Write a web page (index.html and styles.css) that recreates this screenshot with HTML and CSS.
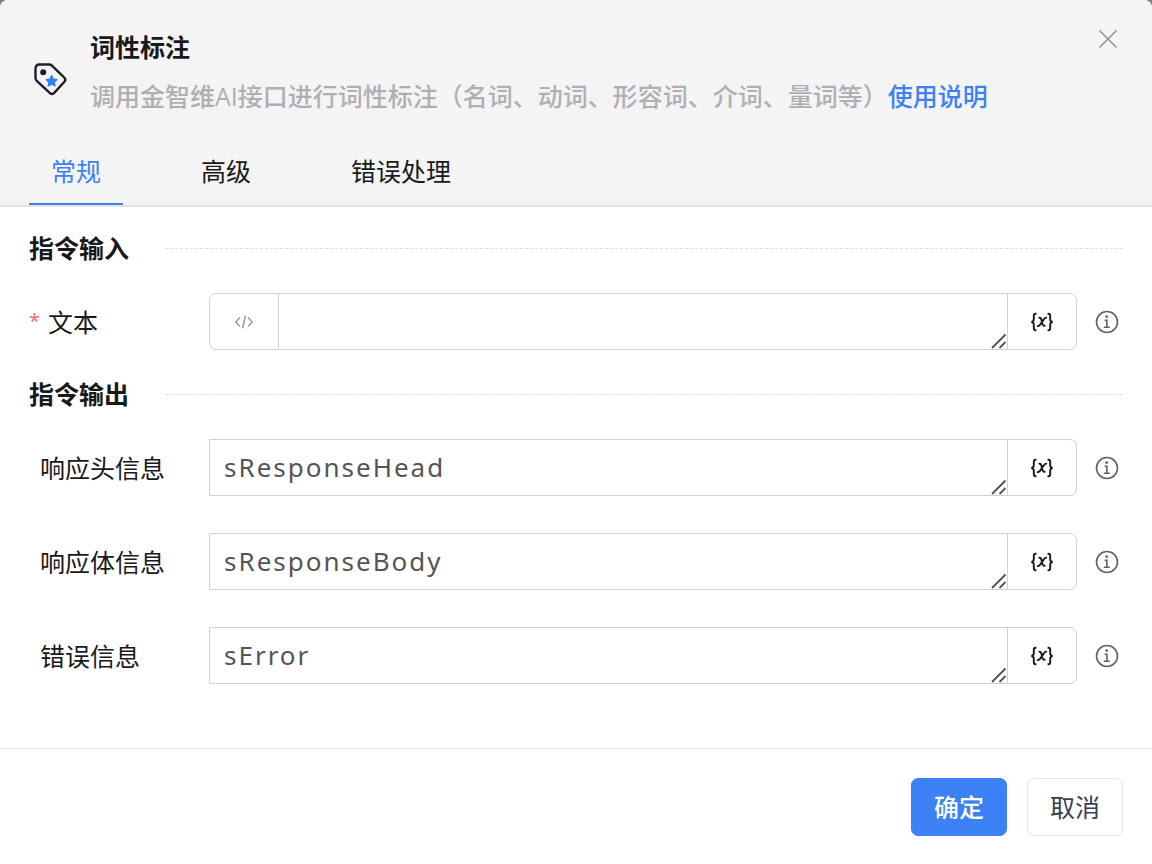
FILE: index.html
```
<!DOCTYPE html>
<html lang="zh-CN">
<head>
  <meta charset="UTF-8">
  <meta name="viewport" content="width=device-width, initial-scale=1.0">
  <title>词性标注</title>
  <link rel="stylesheet" href="styles.css">
</head>
<body>

  <!-- shared icons -->
  <svg class="sprite" aria-hidden="true">
    <symbol id="icon-info" viewBox="0 0 24 24">
      <circle cx="12" cy="12" r="10.5" fill="none" stroke="currentColor" stroke-width="1.6"/>
      <circle cx="11.700" cy="6.600" r="1.400" fill="currentColor"/>
      <path d="M9.600 10.300h2.300v7M8.800 17.300h6" fill="none" stroke="currentColor" stroke-width="1.600"/>
    </symbol>
    <symbol id="icon-var" viewBox="0 0 24 20">
      <path d="M6.400 1.800H5.600Q3.800 1.800 3.800 3.800V7.200Q3.800 9.600 1.400 10Q3.800 10.400 3.800 12.800V16.200Q3.800 18.200 5.600 18.200H6.400M17.600 1.800H18.400Q20.200 1.800 20.200 3.800V7.200Q20.200 9.600 22.600 10Q20.200 10.400 20.200 12.800V16.200Q20.200 18.200 18.400 18.200H17.600" fill="none" stroke="currentColor" stroke-width="1.900"/>
      <path d="M8.600 6Q10.600 5.100 11.300 7.400L12.700 12.200Q13.400 14.400 15.500 13.500M17 5.800Q15.400 5.200 13.900 7.200L10.200 12.600Q8.900 14.500 7 13.800" fill="none" stroke="currentColor" stroke-width="1.900"/>
    </symbol>
    <symbol id="icon-grip" viewBox="0 0 16 16">
      <path d="M1 15L14.500 1.500M8.500 15L14.500 9" fill="none" stroke="currentColor" stroke-width="1.800"/>
    </symbol>
  </svg>

  <div class="dialog" role="dialog" aria-labelledby="dialog-title">
    <header class="dialog-header">
      <div class="intro">
        <svg class="tag-icon" viewBox="0 0 36 36" aria-hidden="true">
          <path d="M7.500 3.500H17.200Q18.600 3.500 19.700 4.500L32.200 16.500Q34.400 18.800 32.200 21L22.200 31.800Q20 34 17.700 31.800L5 20.200Q3.500 18.800 3.500 17V7.500Q3.500 3.500 7.500 3.500Z" fill="none" stroke="#1f1d2b" stroke-width="2.400"/>
          <circle cx="11.200" cy="11.300" r="3" fill="#1f1d2b"/>
          <path d="M19.600 14.600L21.300 18L25 18.600L22.400 21.300L23 25L19.600 23.300L16.200 25L16.800 21.300L14.200 18.600L17.900 18Z" fill="#2b82ff" stroke="#2b82ff" stroke-width="1.200" stroke-linejoin="round"/>
        </svg>
        <div class="intro-text">
          <h1 id="dialog-title">词性标注</h1>
          <p>调用金智维AI接口进行词性标注（名词、动词、形容词、介词、量词等）<a href="#">使用说明</a></p>
        </div>
        <button class="close" type="button" aria-label="关闭">
          <svg viewBox="0 0 20 20"><path d="M1.500 1.500L18.500 18.500M18.500 1.500L1.500 18.500" stroke="currentColor" stroke-width="1.600"/></svg>
        </button>
      </div>
      <nav class="tabs" role="tablist">
        <button class="tab active" type="button" role="tab" aria-selected="true">常规</button>
        <button class="tab" type="button" role="tab">高级</button>
        <button class="tab" type="button" role="tab">错误处理</button>
      </nav>
    </header>

    <form class="dialog-body">
      <h2>指令输入</h2>
      <div class="field">
        <label class="required" for="text">文本</label>
        <div class="control rounded">
          <button class="code" type="button" aria-label="代码">
            <svg viewBox="0 0 20 14"><path d="M6 2.500L1.800 7L6 11.500M14 2.500L18.200 7L14 11.500M11.400 .8L8.600 13.200" fill="none" stroke="currentColor" stroke-width="1.600"/></svg>
          </button>
          <div class="text-wrap">
            <textarea id="text" rows="1"></textarea>
            <svg class="grip"><use href="#icon-grip"/></svg>
          </div>
          <button class="var" type="button" aria-label="变量"><svg><use href="#icon-var"/></svg></button>
        </div>
        <button class="info" type="button" aria-label="说明"><svg><use href="#icon-info"/></svg></button>
      </div>

      <h2>指令输出</h2>
      <div class="field">
        <label for="head">响应头信息</label>
        <div class="control">
          <div class="text-wrap">
            <textarea id="head" rows="1" spellcheck="false">sResponseHead</textarea>
            <svg class="grip"><use href="#icon-grip"/></svg>
          </div>
          <button class="var" type="button" aria-label="变量"><svg><use href="#icon-var"/></svg></button>
        </div>
        <button class="info" type="button" aria-label="说明"><svg><use href="#icon-info"/></svg></button>
      </div>
      <div class="field">
        <label for="body">响应体信息</label>
        <div class="control">
          <div class="text-wrap">
            <textarea id="body" rows="1" spellcheck="false">sResponseBody</textarea>
            <svg class="grip"><use href="#icon-grip"/></svg>
          </div>
          <button class="var" type="button" aria-label="变量"><svg><use href="#icon-var"/></svg></button>
        </div>
        <button class="info" type="button" aria-label="说明"><svg><use href="#icon-info"/></svg></button>
      </div>
      <div class="field">
        <label for="error">错误信息</label>
        <div class="control">
          <div class="text-wrap">
            <textarea id="error" rows="1" spellcheck="false">sError</textarea>
            <svg class="grip"><use href="#icon-grip"/></svg>
          </div>
          <button class="var" type="button" aria-label="变量"><svg><use href="#icon-var"/></svg></button>
        </div>
        <button class="info" type="button" aria-label="说明"><svg><use href="#icon-info"/></svg></button>
      </div>
    </form>

    <footer class="dialog-footer">
      <button class="btn primary" type="button">确定</button>
      <button class="btn" type="button">取消</button>
    </footer>
  </div>

</body>
</html>
```
FILE: styles.css
```
* {
  box-sizing: border-box;
}

body {
  margin: 0;
  background: #7f7f7f;
  color: #18191b;
  font-family: "Open Sans", "Noto Sans CJK SC", sans-serif;
  font-size: 25px;
  line-height: 36px;
}

button,
textarea {
  margin: 0;
  padding: 0;
  border: none;
  background: none;
  color: inherit;
  font: inherit;
}

button {
  cursor: pointer;
}

svg {
  display: block;
}

.sprite {
  display: none;
}

.dialog {
  display: flex;
  flex-direction: column;
  min-height: 100vh;
  background: #fff;
  border-radius: 8px 8px 0 0;
  overflow: hidden;
}

/* header */
.dialog-header {
  padding: 29px 29px 0;
  background: #f4f4f4;
  border-bottom: 2px solid #e2e2e3;
}

.intro {
  display: flex;
  align-items: flex-start;
}

.tag-icon {
  width: 36px;
  height: 36px;
  margin: 32px 22px 0 3px;
}

.intro-text {
  flex: 1;
}

h1 {
  margin: 0 0 13px;
  font-size: 25px;
  font-weight: bold;
}

.intro-text p {
  margin: 0;
  color: #b0aeb5;
  font-weight: 500;
}

.intro-text a {
  color: #3c82f6;
  text-decoration: none;
}

.close {
  color: #909399;
  padding-right: 5px;
}

.close svg {
  width: 20px;
  height: 20px;
}

.tabs {
  display: flex;
  gap: 56px;
  margin-top: 32px;
}

.tab {
  padding: 7px 22px 14px;
  border-bottom: 2px solid transparent;
}

.tab.active {
  color: #3c82f6;
  border-bottom-color: #3c82f6;
}

/* form */
.dialog-body {
  flex: 1;
  padding: 23px 29px;
}

h2 {
  display: flex;
  align-items: center;
  gap: 36px;
  margin: 0 0 27px;
  font-size: 25px;
  font-weight: bold;
}

h2::after {
  content: "";
  flex: 1;
  border-top: 1px dashed #dcdfe6;
}

.field + h2 {
  margin-top: 26px;
}

.field {
  display: flex;
  align-items: center;
}

.field + .field {
  margin-top: 37px;
}

.field label {
  width: 180px;
  padding-left: 11px;
}

.field .required {
  padding-left: 0;
}

.required::before {
  content: "*";
  margin-right: 8px;
  color: #f56c6c;
  font-size: 20px;
  vertical-align: 4px;
  line-height: 20px;
}

.control {
  display: flex;
  flex: 1;
  border: 1px solid #d0d0d3;
  border-radius: 0 7px 7px 0;
}

.control.rounded {
  border-radius: 7px;
}

.text-wrap {
  position: relative;
  flex: 1;
}

.text-wrap textarea {
  display: block;
  width: 100%;
  height: 55px;
  padding: 9px 14px;
  color: #555;
  font-family: "Noto Sans", "Noto Sans CJK SC", sans-serif;
  font-size: 26px;
  letter-spacing: 2px;
  outline: none;
  resize: none;
  overflow: hidden;
}

.grip {
  position: absolute;
  right: 0;
  bottom: 0;
  width: 16px;
  height: 16px;
  color: #505256;
  pointer-events: none;
}

.code,
.var {
  display: flex;
  align-items: center;
  justify-content: center;
  width: 69px;
}

.code {
  color: #9a9faa;
  border-right: 1px solid #d0d0d3;
}

.code svg {
  width: 20px;
  height: 14px;
}

.var {
  border-left: 1px solid #d0d0d3;
}

.var svg {
  width: 24px;
  height: 20px;
}

.info {
  margin: 0 4px 0 18px;
  color: #606266;
}

.info svg {
  width: 24px;
  height: 24px;
}

/* footer */
.dialog-footer {
  display: flex;
  justify-content: flex-end;
  gap: 20px;
  padding: 29px 29px 28px;
  border-top: 1px solid #e4e5e9;
}

.btn {
  padding: 10px 22px;
  border: 1px solid #e2e4e9;
  border-radius: 7px;
  color: #374151;
}

.btn.primary {
  background: #3c82f6;
  border-color: #3c82f6;
  color: #fff;
  font-weight: 500;
}
```
